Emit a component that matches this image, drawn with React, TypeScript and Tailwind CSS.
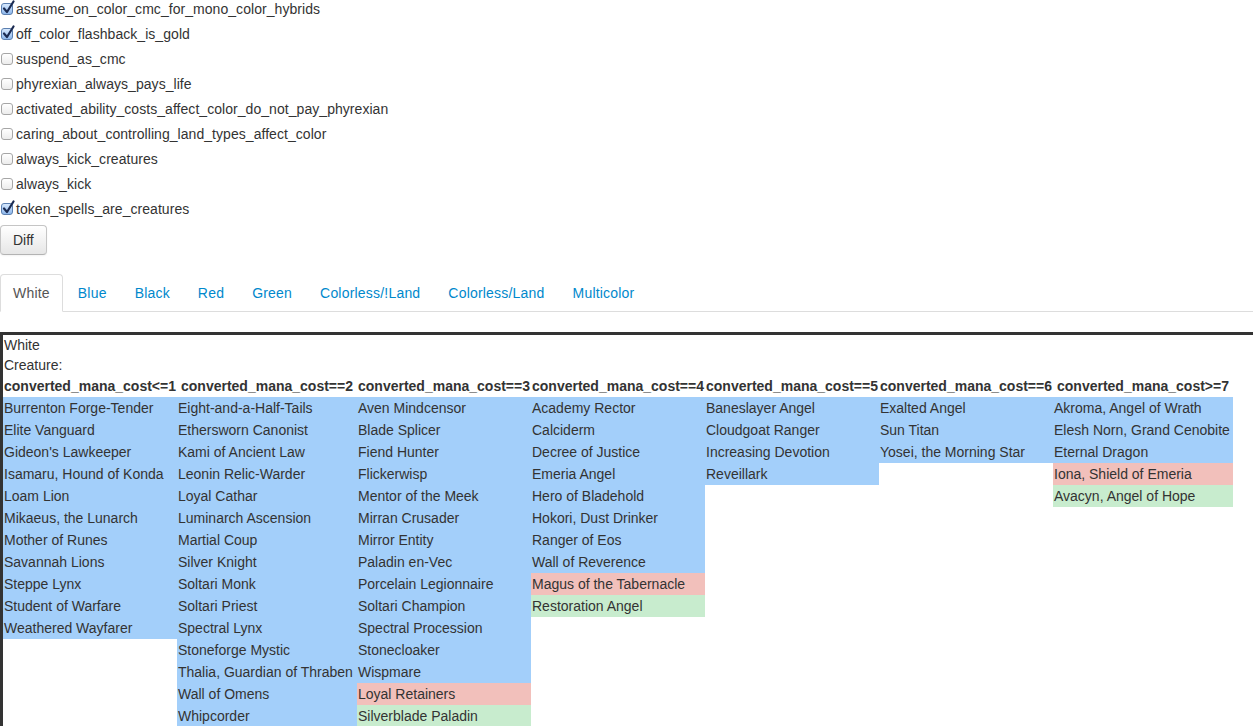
import React from 'react';

type Card = { name: string; tone?: 'blue' | 'red' | 'green' };

const options: { label: string; checked: boolean }[] = [
  { label: 'assume_on_color_cmc_for_mono_color_hybrids', checked: true },
  { label: 'off_color_flashback_is_gold', checked: true },
  { label: 'suspend_as_cmc', checked: false },
  { label: 'phyrexian_always_pays_life', checked: false },
  { label: 'activated_ability_costs_affect_color_do_not_pay_phyrexian', checked: false },
  { label: 'caring_about_controlling_land_types_affect_color', checked: false },
  { label: 'always_kick_creatures', checked: false },
  { label: 'always_kick', checked: false },
  { label: 'token_spells_are_creatures', checked: true },
];

const tabs = ['White', 'Blue', 'Black', 'Red', 'Green', 'Colorless/!Land', 'Colorless/Land', 'Multicolor'];

const b = (names: string[]): Card[] => names.map((name) => ({ name, tone: 'blue' }));

const columns: { title: string; cards: Card[] }[] = [
  {
    title: 'converted_mana_cost<=1',
    cards: b([
      'Burrenton Forge-Tender',
      'Elite Vanguard',
      "Gideon's Lawkeeper",
      'Isamaru, Hound of Konda',
      'Loam Lion',
      'Mikaeus, the Lunarch',
      'Mother of Runes',
      'Savannah Lions',
      'Steppe Lynx',
      'Student of Warfare',
      'Weathered Wayfarer',
    ]),
  },
  {
    title: 'converted_mana_cost==2',
    cards: b([
      'Eight-and-a-Half-Tails',
      'Ethersworn Canonist',
      'Kami of Ancient Law',
      'Leonin Relic-Warder',
      'Loyal Cathar',
      'Luminarch Ascension',
      'Martial Coup',
      'Silver Knight',
      'Soltari Monk',
      'Soltari Priest',
      'Spectral Lynx',
      'Stoneforge Mystic',
      'Thalia, Guardian of Thraben',
      'Wall of Omens',
      'Whipcorder',
    ]),
  },
  {
    title: 'converted_mana_cost==3',
    cards: [
      ...b([
        'Aven Mindcensor',
        'Blade Splicer',
        'Fiend Hunter',
        'Flickerwisp',
        'Mentor of the Meek',
        'Mirran Crusader',
        'Mirror Entity',
        'Paladin en-Vec',
        'Porcelain Legionnaire',
        'Soltari Champion',
        'Spectral Procession',
        'Stonecloaker',
        'Wispmare',
      ]),
      { name: 'Loyal Retainers', tone: 'red' },
      { name: 'Silverblade Paladin', tone: 'green' },
    ],
  },
  {
    title: 'converted_mana_cost==4',
    cards: [
      ...b([
        'Academy Rector',
        'Calciderm',
        'Decree of Justice',
        'Emeria Angel',
        'Hero of Bladehold',
        'Hokori, Dust Drinker',
        'Ranger of Eos',
        'Wall of Reverence',
      ]),
      { name: 'Magus of the Tabernacle', tone: 'red' },
      { name: 'Restoration Angel', tone: 'green' },
    ],
  },
  {
    title: 'converted_mana_cost==5',
    cards: b(['Baneslayer Angel', 'Cloudgoat Ranger', 'Increasing Devotion', 'Reveillark']),
  },
  {
    title: 'converted_mana_cost==6',
    cards: b(['Exalted Angel', 'Sun Titan', 'Yosei, the Morning Star']),
  },
  {
    title: 'converted_mana_cost>=7',
    cards: [
      ...b(['Akroma, Angel of Wrath', 'Elesh Norn, Grand Cenobite', 'Eternal Dragon']),
      { name: 'Iona, Shield of Emeria', tone: 'red' },
      { name: 'Avacyn, Angel of Hope', tone: 'green' },
    ],
  },
];

const toneClass = {
  blue: 'bg-[#a3cffa]',
  red: 'bg-[#f2c0bb]',
  green: 'bg-[#c8ecce]',
};

function Box({ checked }: { checked: boolean }) {
  if (!checked) {
    return (
      <span className="mt-[4px] ml-[1px] mr-[3px] inline-block w-[12px] h-[12px] shrink-0 rounded-[3px] border border-[#a6a6a6] bg-gradient-to-b from-white to-[#ececec]" />
    );
  }
  return (
    <span className="relative mt-[4px] ml-[1px] mr-[3px] inline-block w-[12px] h-[12px] shrink-0 rounded-[3px] border border-[#5b7fb0] bg-gradient-to-b from-[#d6e8fd] to-[#8fb8ec]">
      <svg className="absolute left-[0px] top-[-4px]" width="13" height="15" viewBox="0 0 13 15">
        <path d="M2 8.5 L5 12 L11.5 1.5" fill="none" stroke="#1b2b52" strokeWidth="2.2" strokeLinecap="round" strokeLinejoin="round" />
      </svg>
    </span>
  );
}

export default function App() {
  return (
    <div className="min-h-screen bg-white text-[14px] leading-[20px] text-[#333] font-['Liberation_Sans','Helvetica_Neue',Arial,sans-serif]">
      <div className="flex flex-col -mt-[1px]">
        {options.map((opt) => (
          <label key={opt.label} className="flex items-start h-[20px] mb-[5px] tracking-[0.05px]">
            <Box checked={opt.checked} />
            <span>{opt.label}</span>
          </label>
        ))}
      </div>

      <button className="mt-[1px] h-[30px] px-[12px] rounded-[4px] border border-[#c5c5c5] border-b-[#b3b3b3] bg-gradient-to-b from-white to-[#e6e6e6] text-[#333] shadow-[inset_0_1px_0_rgba(255,255,255,0.2),0_1px_2px_rgba(0,0,0,0.05)]">
        Diff
      </button>

      <ul className="mt-[19px] mb-[20px] flex border-b border-[#ddd] tracking-[0.2px]">
        {tabs.map((t, i) => (
          <li key={t} className="-mb-px mr-[2px]">
            <a
              className={
                i === 0
                  ? 'block px-[12px] py-[8px] rounded-t-[4px] border border-[#ddd] border-b-transparent bg-white text-[#555]'
                  : 'block px-[12px] py-[8px] rounded-t-[4px] border border-transparent text-[#0088cc]'
              }
            >
              {t}
            </a>
          </li>
        ))}
      </ul>

      <div className="border-t-[3px] border-l-[3px] border-[#333] text-[#333]">
        <div className="pl-[1px]">White</div>
        <div className="pl-[1px]">Creature:</div>
        <div className="grid grid-cols-[174px_180px_174px_174px_174px_174px_180px] items-start">
          {columns.map((col) => (
            <div key={col.title} className="flex flex-col">
              <div className="py-[1px] text-center font-bold whitespace-nowrap">{col.title}</div>
              {col.cards.map((c) => (
                <div key={c.name} className={`py-[1px] pl-[1px] whitespace-nowrap ${toneClass[c.tone ?? 'blue']}`}>
                  {c.name}
                </div>
              ))}
            </div>
          ))}
        </div>
      </div>
    </div>
  );
}
